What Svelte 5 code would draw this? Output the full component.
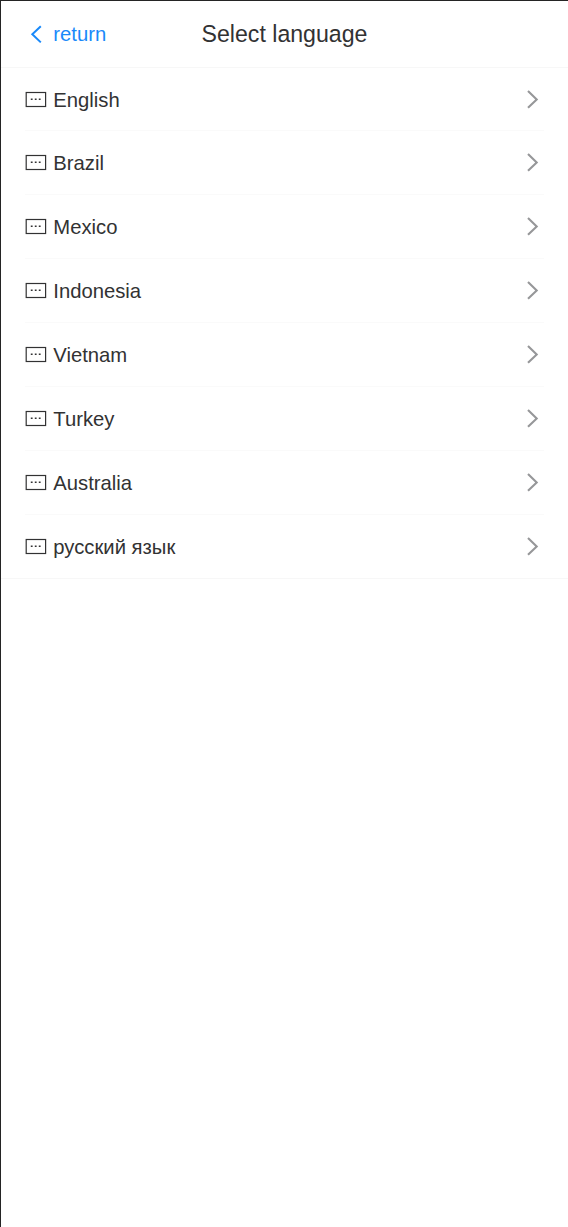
<script>
  const languages = ['English', 'Brazil', 'Mexico', 'Indonesia', 'Vietnam', 'Turkey', 'Australia', 'русский язык'];
</script>

<main>
  <header>
    <button class="back">
      <svg width="12" height="20" viewBox="0 0 12 20"><path d="M10.8 2.2 2.3 10.3l8.5 8.1" /></svg>
      <span>return</span>
    </button>
    <h1>Select language</h1>
  </header>
  <ul>
    {#each languages as language}
      <li>
        <svg class="bubble" width="22" height="17" viewBox="0 0 22 17">
          <rect x="1.2" y="1.5" width="19.4" height="14" />
          <path d="M5.8 8.2h1.8m2.2 0h1.8m2.2 0h1.8" />
        </svg>
        <span>{language}</span>
        <svg class="arrow" width="12" height="21" viewBox="0 0 12 21"><path d="m1 2 8.7 8.4L1 18.8" /></svg>
      </li>
    {/each}
  </ul>
</main>

<style>
  :global(body) { background: #fff; }
  main {
    box-sizing: border-box;
    min-height: 1227px;
    border-top: 1px solid #242424;
    border-left: 1px solid #242424;
    color: #323233;
    font-family: "Liberation Sans", Arial, sans-serif;
    font-size: 20.25px;
  }
  header {
    display: grid;
    grid-template-columns: 1fr auto 1fr;
    align-items: center;
    height: 66px;
    border-bottom: 1px solid #f7f7f7;
  }
  .back {
    display: flex;
    align-items: center;
    gap: 11.3px;
    padding: 0 0 0 29px;
    border: 0;
    background: none;
    color: #1989fa;
    font: inherit;
  }
  h1 { margin: 0; font-size: 23.15px; font-weight: 400; }
  svg { flex: none; fill: none; stroke: currentColor; stroke-width: 2; }
  ul { margin: 0; padding: 0; list-style: none; border-bottom: 1px solid #f7f7f7; }
  li {
    display: flex;
    align-items: center;
    box-sizing: border-box;
    height: 64px;
    margin: 0 24px;
    border-bottom: 1px solid #fafafa;
    line-height: 30px;
  }
  li:first-child { height: 63px; }
  li:first-child span { padding-top: 2px; }
  li:last-child { height: 63px; border: 0; }
  li span { margin-left: 6.3px; }
  .bubble { stroke-width: 1.2; }
  .bubble path { stroke-width: 1.6; }
  .arrow { margin: 0 5px 0 auto; color: #969799; stroke-width: 2.1; }
</style>
